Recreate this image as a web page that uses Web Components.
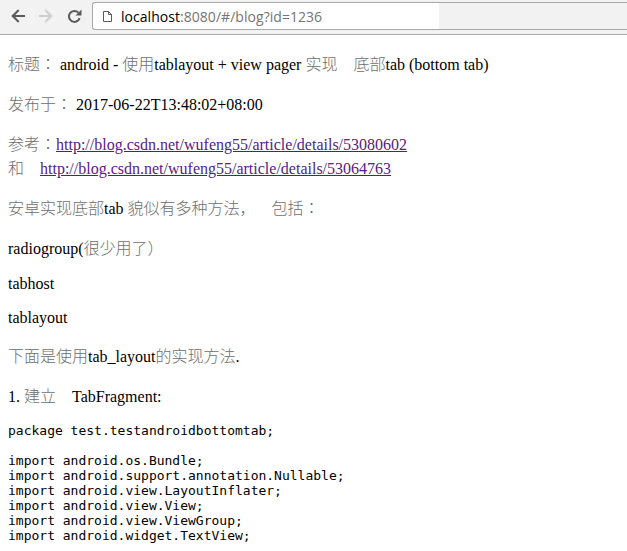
<!DOCTYPE html>
<html>
<head>
<meta charset="utf-8">
<style>
html, body { margin: 0; padding: 0; background: #fff; }
body { font-family: "Liberation Serif", "Noto Sans CJK JP", serif; font-size: 16px; color: #000; overflow: hidden; height: 551px; }
</style>
</head>
<body>
<browser-bar url-host="localhost" url-rest=":8080/#/blog?id=1236"></browser-bar>
<blog-post>
<post-para><zh-t>标题：</zh-t> android - <zh-t>使用</zh-t>tablayout + view pager <zh-t>实现　底部</zh-t>tab (bottom tab)</post-para>
<post-para><zh-t>发布于：</zh-t> 2017-06-22T13:48:02+08:00</post-para>
<post-para><zh-t>参考：</zh-t><a href="#a">http://blog.csdn.net/wufeng55/article/details/53080602</a><br><zh-t>和　</zh-t><a href="#b">http://blog.csdn.net/wufeng55/article/details/53064763</a></post-para>
<post-para><zh-t>安卓实现底部</zh-t>tab <zh-t>貌似有多种方法，　包括：</zh-t></post-para>
<post-para>radiogroup(<zh-t>很少用了）</zh-t></post-para>
<post-para>tabhost</post-para>
<post-para>tablayout</post-para>
<post-para><zh-t>下面是使用</zh-t>tab_layout<zh-t>的实现方法</zh-t>.</post-para>
<post-para>1. <zh-t>建立　</zh-t>TabFragment:</post-para>
<code-block>package test.testandroidbottomtab;

import android.os.Bundle;
import android.support.annotation.Nullable;
import android.view.LayoutInflater;
import android.view.View;
import android.view.ViewGroup;
import android.widget.TextView;</code-block>
</blog-post>
<script>
class BrowserBar extends HTMLElement {
    constructor() {
        super();
        this.attachShadow({ mode: 'open' });
    }

    connectedCallback() {
        this.shadowRoot.innerHTML = `
            <style>
                :host { display: flex; align-items: flex-start; height: 32px; background: #f2f2f2; border-bottom: 1px solid #a9a9a9; padding: 2px 0 0 4px; }
                .btn { width: 28px; height: 28px; display: flex; align-items: center; justify-content: center; flex: none; }
                svg { display: block; }
                .omni { margin-left: 4px; flex: none; width: 346px; height: 26px; background: #fff; border: 1px solid #a9a9a9; border-right: 0; border-radius: 3px 0 0 3px; display: flex; align-items: center; font: 14px "Open Sans", "Liberation Sans", sans-serif; letter-spacing: .04px; color: #757575; }
                .page { margin: 0 9px 0 10px; flex: none; }
                b { font-weight: 400; color: #000; }
                .rest { flex: 1; height: 26px; border-top: 1px solid #a9a9a9; border-bottom: 1px solid #a9a9a9; }
            </style>
            <div class="btn"><svg width="14" height="14" viewBox="0 0 14 14" fill="none" stroke="#5a5a5a" stroke-width="2"><path d="M14 7H2M7.700 1 1.700 7l6 6"/></svg></div>
            <div class="btn"><svg width="14" height="14" viewBox="0 0 14 14" fill="none" stroke="#cfcfcf" stroke-width="2"><path d="M0 7h12M6.300 1l6 6-6 6"/></svg></div>
            <div class="btn"><svg width="15" height="15" viewBox="0 0 15 15" fill="none"><path d="M12.600 9.200A5.500 5.500 0 1 1 11.400 3.600" stroke="#5a5a5a" stroke-width="2"/><path d="M14.500 .5V6.500H8.500z" fill="#5a5a5a"/></svg></div>
            <div class="omni"><svg class="page" width="9" height="11" viewBox="0 0 9 11" fill="none" stroke="#5a5a5a"><path d="M.5.500h5l3 3v7h-8zM5.500.5v3h3"/></svg><span><b>${this.getAttribute('url-host')}</b>${this.getAttribute('url-rest')}</span></div>
            <div class="rest"></div>
        `;
    }
}

class BlogPost extends HTMLElement {
    constructor() {
        super();
        this.attachShadow({ mode: 'open' }).innerHTML = `<style>:host { display: block; padding: 16px 8px 0; }</style><slot></slot>`;
    }
}

class PostPara extends HTMLElement {
    constructor() {
        super();
        this.attachShadow({ mode: 'open' }).innerHTML = `<style>:host { display: block; margin: 0 0 16px; } ::slotted(a) { color: #551a8b; }</style><slot></slot>`;
    }
}

// inline element: no whitespace in the shadow root or it shows up as spaces
class ZhT extends HTMLElement {
    constructor() {
        super();
        this.attachShadow({ mode: 'open' }).innerHTML = `<style>:host { display: inline; font-family: "Noto Sans CJK JP", sans-serif; font-weight: 300; color: #6e6e6e; text-spacing-trim: space-all; }</style><slot></slot>`;
    }
}

class CodeBlock extends HTMLElement {
    constructor() {
        super();
        this.attachShadow({ mode: 'open' }).innerHTML = `<style>:host { display: block; font: 13px/15px "DejaVu Sans Mono", monospace; white-space: pre; color: #000; }</style><slot></slot>`;
    }
}

customElements.define('browser-bar', BrowserBar);
customElements.define('blog-post', BlogPost);
customElements.define('post-para', PostPara);
customElements.define('zh-t', ZhT);
customElements.define('code-block', CodeBlock);
</script>
</body>
</html>
